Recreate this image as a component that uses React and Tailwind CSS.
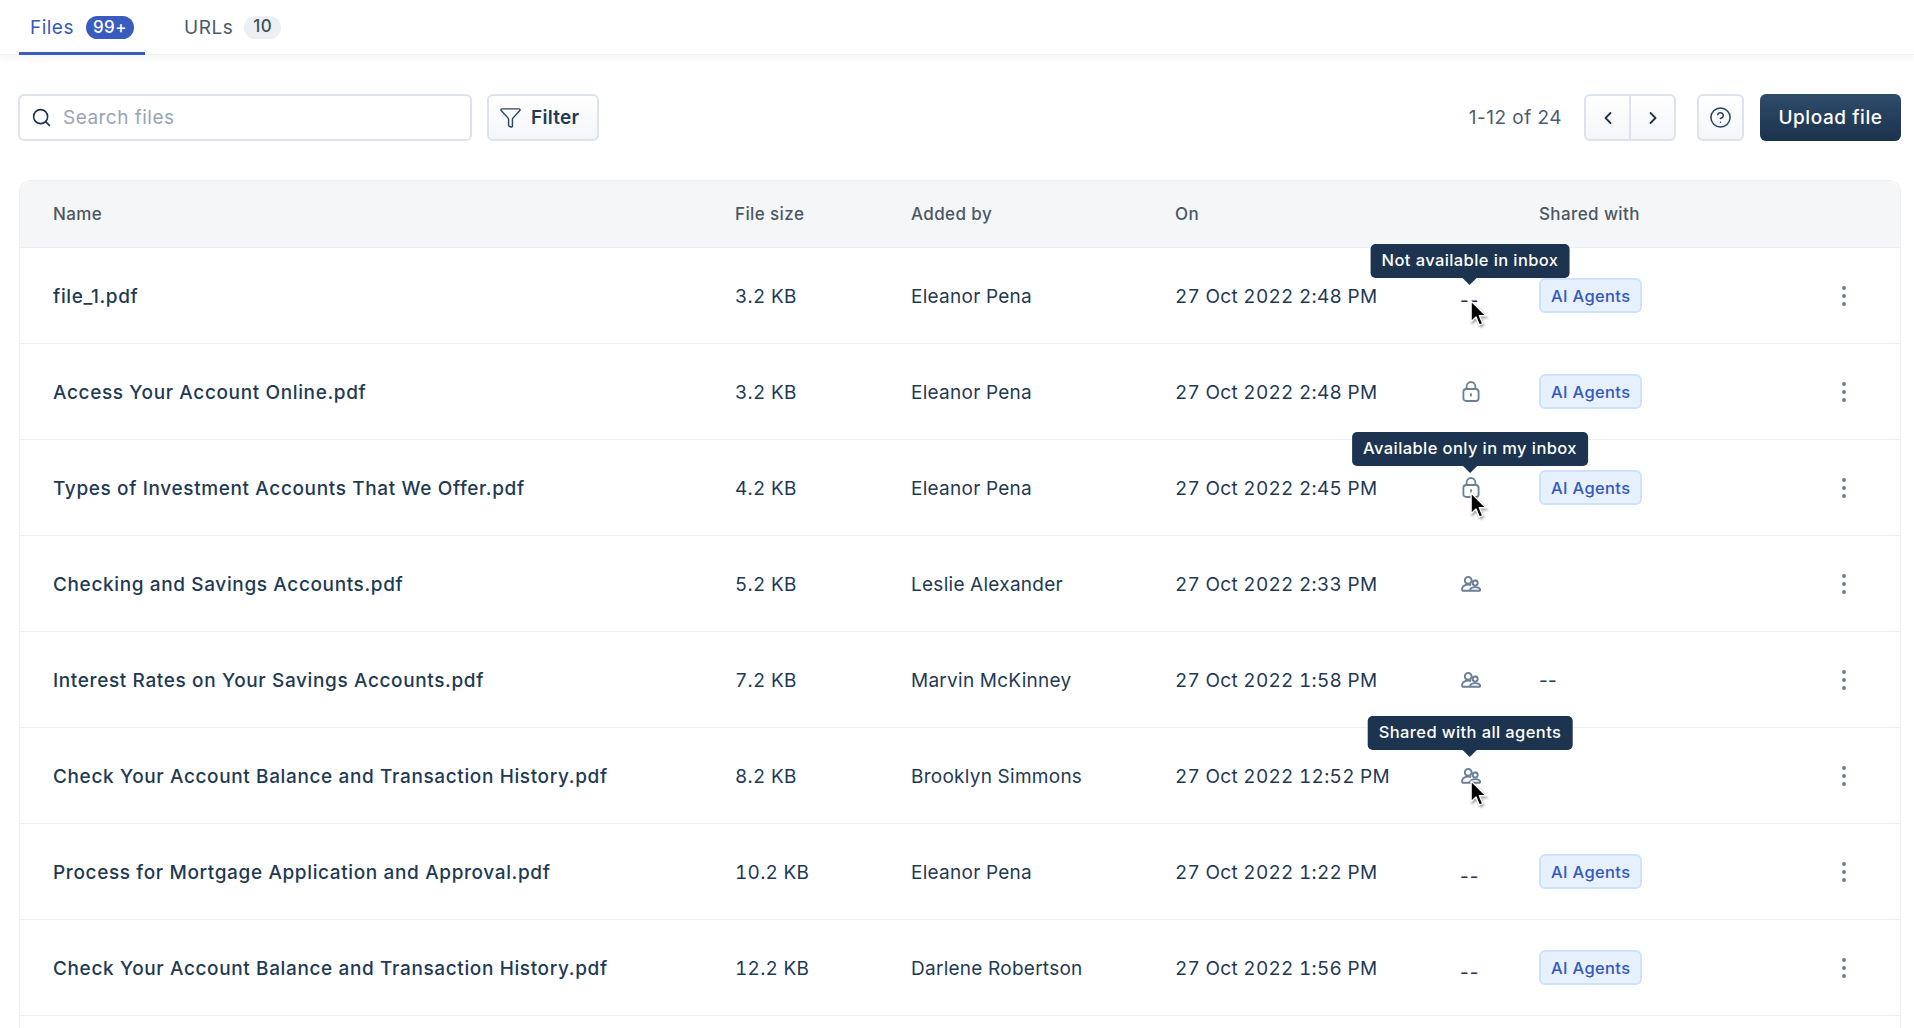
import React from "react";
import { Search, Funnel, ChevronLeft, ChevronRight, CircleHelp } from "lucide-react";

const files = [
  { name: "file_1.pdf", size: "3.2 KB", by: "Eleanor Pena", on: "27 Oct 2022 2:48 PM", access: "none", shared: "ai", tip: "Not available in inbox", tipPos: "bottom-[29px]" },
  { name: "Access Your Account Online.pdf", size: "3.2 KB", by: "Eleanor Pena", on: "27 Oct 2022 2:48 PM", access: "lock", shared: "ai" },
  { name: "Types of Investment Accounts That We Offer.pdf", size: "4.2 KB", by: "Eleanor Pena", on: "27 Oct 2022 2:45 PM", access: "lock", shared: "ai", tip: "Available only in my inbox", tipPos: "bottom-[33px]" },
  { name: "Checking and Savings Accounts.pdf", size: "5.2 KB", by: "Leslie Alexander", on: "27 Oct 2022 2:33 PM", access: "people" },
  { name: "Interest Rates on Your Savings Accounts.pdf", size: "7.2 KB", by: "Marvin McKinney", on: "27 Oct 2022 1:58 PM", access: "people", shared: "none" },
  { name: "Check Your Account Balance and Transaction History.pdf", size: "8.2 KB", by: "Brooklyn Simmons", on: "27 Oct 2022 12:52 PM", access: "people", tip: "Shared with all agents", tipPos: "bottom-[37px]" },
  { name: "Process for Mortgage Application and Approval.pdf", size: "10.2 KB", by: "Eleanor Pena", on: "27 Oct 2022 1:22 PM", access: "none", shared: "ai" },
  { name: "Check Your Account Balance and Transaction History.pdf", size: "12.2 KB", by: "Darlene Robertson", on: "27 Oct 2022 1:56 PM", access: "none", shared: "ai" },
];

const cols = "grid grid-cols-[682px_176px_264px_285px_79px_1fr_30px] items-center pl-[33px] pr-[36px]";

function LockIcon() {
  return (
    <svg width="18" height="21" viewBox="0 0 18 21" fill="none" stroke="#6b7f96" strokeWidth="1.8" className="block ml-[2px]">
      <rect x="1.4" y="8" width="15.2" height="12" rx="2.8" />
      <path d="M4.6 8V5.4a4.4 4.4 0 0 1 8.8 0V8" />
      <circle cx="9" cy="13.4" r="1.1" fill="#6b7f96" stroke="none" />
      <path d="M9 13.5v2.2" strokeWidth="1.2" />
    </svg>
  );
}

function PeopleIcon() {
  return (
    <svg width="20" height="16" viewBox="0 0 20 16" fill="none" stroke="#6b7f96" strokeWidth="1.9" className="block ml-[1px]">
      <circle cx="7.2" cy="4.4" r="3.4" />
      <path d="M9.5 14.8H2.6c-1.2 0-1.8-.8-1.6-1.8C1.6 10.2 4 8.6 7.2 8.6c1.2 0 2.2.2 3 .5" />
      <circle cx="14.2" cy="7" r="2.5" />
      <path d="M10.4 14.8c-.9 0-1.4-.5-1.2-1.2.5-1.5 2.5-2.5 5-2.5s4.5 1 5 2.5c.2.7-.3 1.2-1.2 1.2z" />
    </svg>
  );
}

function Cursor() {
  return (
    <svg width="20" height="30" viewBox="0 0 18 27" className="absolute left-0 top-0 drop-shadow-[1px_2px_1px_rgba(0,0,0,0.35)]">
      <path d="M1 1v18.5l4.4-4.2 3 7.2 3-1.3-3-7h6z" fill="#000" stroke="#fff" strokeWidth="1.2" strokeLinejoin="round" />
    </svg>
  );
}

function Tooltip({ text, pos }) {
  return (
    <div className={`absolute ${pos} left-[10px] -translate-x-1/2 z-10 whitespace-nowrap rounded-[5px] bg-[#1c344f] px-[11px] h-[34px] flex items-center text-[16.5px] leading-none font-medium tracking-[0.024em] text-white`}>
      {text}
      <span className="absolute left-1/2 -translate-x-1/2 -bottom-[5px] size-[10px] rotate-45 bg-[#1c344f]" />
    </div>
  );
}

function Access({ kind, tip, tipPos }) {
  return (
    <div className="relative h-[22px] flex items-center">
      {kind === "lock" && <LockIcon />}
      {kind === "people" && <PeopleIcon />}
      {kind === "none" && <span className="relative top-[6px] text-[#1c344f] tracking-[0.05em] normal-nums">--</span>}
      {tip && <Tooltip text={tip} pos={tipPos} />}
      {tip && (
        <div className="absolute left-[10px] top-[15px] z-20">
          <Cursor />
        </div>
      )}
    </div>
  );
}

function Dots() {
  return (
    <svg width="6" height="22" viewBox="0 0 6 22" fill="#64778e" className="block ml-[7px]">
      <circle cx="3" cy="3" r="1.9" />
      <circle cx="3" cy="11" r="1.9" />
      <circle cx="3" cy="19" r="1.9" />
    </svg>
  );
}

function Row({ f }) {
  return (
    <div className={`${cols} h-[96px] border-b border-[#eceef6] text-[19px] text-[#1f3a54] tracking-[0.014em] tabular-nums`}>
      <div className="pt-[4px] font-medium tracking-[0.033em] truncate normal-nums">{f.name}</div>
      <div className="pt-[4px]">{f.size}</div>
      <div className="pt-[4px]">{f.by}</div>
      <div className="pt-[4px]">{f.on}</div>
      <Access kind={f.access} tip={f.tip} tipPos={f.tipPos} />
      <div className={f.shared === "ai" ? "" : "pt-[4px] normal-nums"}>
        {f.shared === "ai" && (
          <span className="inline-flex items-center h-[35px] px-[10px] pt-[1px] rounded-[6px] border-2 border-[#cfe2fb] bg-[#e7f1fd] text-[16.5px] font-medium text-[#3659bd] tracking-[0.02em]">
            AI Agents
          </span>
        )}
        {f.shared === "none" && "--"}
      </div>
      <Dots />
    </div>
  );
}

export default function App() {
  return (
    <div className="h-[1028px] overflow-hidden bg-white font-['Inter',sans-serif] text-[19px]">
      <div className="h-[55px] border-b border-[#eef0f4] shadow-[0_3px_6px_rgba(30,50,80,0.05)] pl-[19px] flex items-stretch gap-[28px] tracking-[0.025em]">
        <div className="relative flex items-center gap-[12px] px-[11px] h-[55px] text-[#3659bd]">
          <span className="pt-[2px]">Files</span>
          <span className="inline-flex items-center h-[23px] px-[7px] rounded-full bg-[#3a5bbf] text-white text-[17px] font-medium">99+</span>
          <span className="absolute left-0 right-0 bottom-0 h-[3px] bg-[#3a5bbf]" />
        </div>
        <div className="flex items-center gap-[11px] px-[11px] h-[54px] text-[#4a5a6e]">
          <span className="pt-[2px]">URLs</span>
          <span className="inline-flex items-center h-[23px] px-[9px] rounded-full bg-[#eceff3] text-[#3f4f62] text-[17px] font-medium">10</span>
        </div>
      </div>

      <div className="flex items-center h-[47px] mt-[39px] pl-[18px] pr-[13px]">
        <div className="flex items-center w-[454px] h-[47px] rounded-[6px] border-2 border-[#dde2ec] pl-[12px] gap-[11px]">
          <Search size={21} strokeWidth={1.8} className="text-[#1c344f] -ml-[1px]" />
          <span className="pt-[2px] text-[#98a4b5] tracking-[0.025em]">Search files</span>
        </div>
        <button className="ml-[15px] flex items-center gap-[9px] h-[47px] w-[112px] pl-[10px] rounded-[6px] border-2 border-[#dde2ec] bg-gradient-to-b from-white to-[#f4f6f9] font-semibold text-[#1f3a54] tracking-[0.015em]">
          <Funnel size={23} strokeWidth={1.5} className="text-[#2a4562]" />
          <span className="pt-[2px]">Filter</span>
        </button>
        <div className="ml-auto pt-[2px] text-[#4d5c6f] tracking-[0.025em]">1-12 of 24</div>
        <div className="ml-[22px] flex h-[47px] w-[92px] rounded-[6px] border-2 border-[#dde2ec] bg-gradient-to-b from-white to-[#f4f6f9] text-[#1c344f]">
          <div className="flex-1 flex items-center justify-center border-r-2 border-[#dde2ec]">
            <ChevronLeft size={20} strokeWidth={2.2} />
          </div>
          <div className="flex-1 flex items-center justify-center">
            <ChevronRight size={20} strokeWidth={2.2} />
          </div>
        </div>
        <div className="ml-[21px] flex items-center justify-center h-[47px] w-[47px] rounded-[6px] border-2 border-[#dde2ec] bg-gradient-to-b from-white to-[#f4f6f9]">
          <CircleHelp size={23} strokeWidth={1.6} className="text-[#2a4562]" />
        </div>
        <button className="ml-[16px] h-[47px] w-[141px] rounded-[6px] bg-gradient-to-b from-[#2f4c6c] to-[#1b324c] font-medium text-white tracking-[0.03em]">
          <span className="block pt-[2px]">Upload file</span>
        </button>
      </div>

      <div className="mt-[39px] ml-[19px] mr-[13px] rounded-t-[12px] border-x border-t border-[#eef0f5]">
        <div className={`${cols} h-[67px] rounded-t-[12px] bg-[#f5f6f8] border-b border-[#eceef6] text-[17px] font-medium text-[#4b5766] tracking-[0.023em]`}>
          <div className="pt-[2px]">Name</div>
          <div className="pt-[2px]">File size</div>
          <div className="pt-[2px]">Added by</div>
          <div className="pt-[2px] col-span-2">On</div>
          <div className="pt-[2px]">Shared with</div>
          <div />
        </div>
        {files.map((f, i) => (
          <Row key={i} f={f} />
        ))}
        <div className="h-[40px]" />
      </div>
    </div>
  );
}
